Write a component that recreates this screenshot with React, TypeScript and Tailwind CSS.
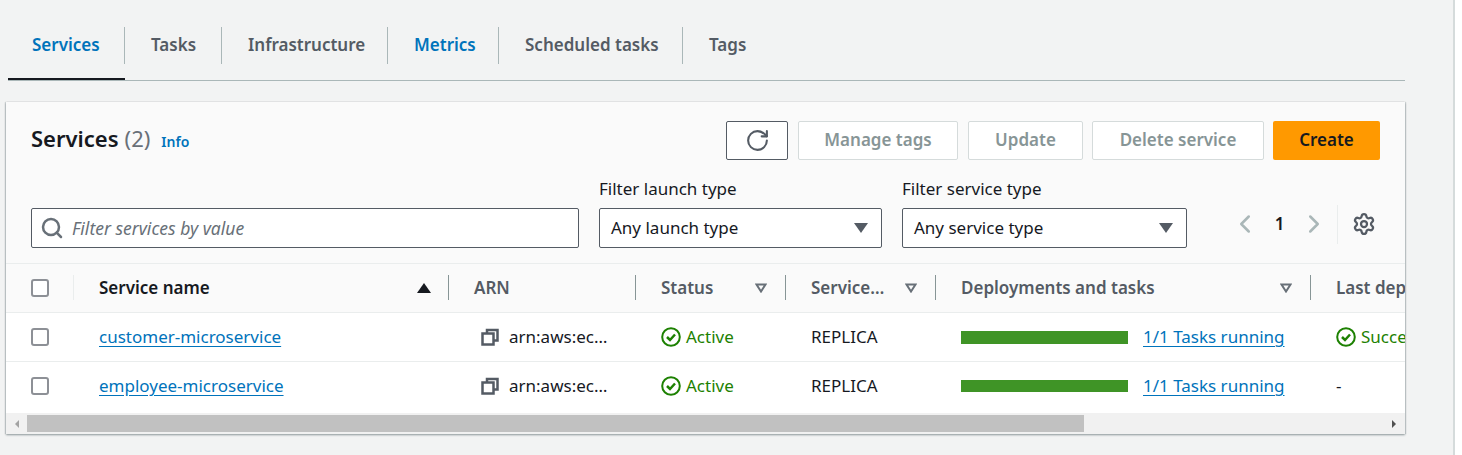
import { ChevronLeft, ChevronRight, RotateCw, Search, Settings } from "lucide-react";

const tabs = [
  { label: "Services", w: "w-[117px]", pad: "pl-[24px]", color: "text-[#0073bb]", active: true },
  { label: "Tasks", w: "w-[97px]", pad: "pl-[26px]", color: "text-[#545b64]" },
  { label: "Infrastructure", w: "w-[166px]", pad: "pl-[26px]", color: "text-[#545b64]" },
  { label: "Metrics", w: "w-[111px]", pad: "pl-[26px]", color: "text-[#0073bb]" },
  { label: "Scheduled tasks", w: "w-[184px]", pad: "pl-[26px]", color: "text-[#545b64]" },
  { label: "Tags", w: "w-[80px]", pad: "pl-[26px]", color: "text-[#545b64]", last: true },
];

function CopyIcon() {
  return (
    <svg width="18" height="18" viewBox="0 0 18 18" fill="none" stroke="#545b64" strokeWidth="2.5" className="shrink-0">
      <path d="M6 5V2h10.500v10.500H13" />
      <rect x="1.500" y="5.500" width="11" height="11" />
    </svg>
  );
}

function CheckIcon() {
  return (
    <svg width="20" height="20" viewBox="0 0 20 20" fill="none" stroke="#1d8102" strokeWidth="2" className="shrink-0">
      <circle cx="10" cy="10" r="8.800" />
      <path d="M6 10l3 3 5-5.500" strokeWidth="2.500" />
    </svg>
  );
}

function FilterCaret() {
  return (
    <svg width="12" height="10" viewBox="0 0 12 10" fill="none" stroke="#687078" strokeWidth="2" className="shrink-0">
      <path d="M1.500 1.500h9L6 8.500z" />
    </svg>
  );
}

function Checkbox() {
  return <div className="w-[18px] h-[18px] rounded-[3px] border-2 border-[#8d9096] bg-white shrink-0" />;
}

function HeadCell({ label, w, filter, dark }: { label: string; w: string; filter?: boolean; dark?: boolean }) {
  return (
    <div className={`${w} h-full flex items-center shrink-0 pl-[25px] pr-[18px] justify-between`}>
      <span className={`font-semibold whitespace-nowrap ${dark ? "text-[#16191f]" : "text-[#545b64]"}`}>{label}</span>
      {filter && <FilterCaret />}
    </div>
  );
}

function Divider() {
  return <div className="w-px h-[25px] bg-[#879596] shrink-0" />;
}

function Row({ name, last }: { name: string; last?: boolean }) {
  return (
    <div className={`flex items-center h-[49px] bg-white ${last ? "pb-[1px]" : "border-b border-[#eaeded]"}`}>
      <div className="w-[68px] pl-[25px] shrink-0">
        <Checkbox />
      </div>
      <div className="w-[400px] pl-[25px] shrink-0">
        <a className="text-[#0073bb] underline underline-offset-[3px]">{name}</a>
      </div>
      <div className="w-[187px] pl-[7px] flex items-center gap-[10px] shrink-0">
        <CopyIcon />
        <span className="text-[#16191f]">arn:aws:ec…</span>
      </div>
      <div className="w-[150px] flex items-center gap-[5px] shrink-0">
        <CheckIcon />
        <span className="text-[#1d8102]">Active</span>
      </div>
      <div className="w-[150px] text-[#16191f] shrink-0">REPLICA</div>
      <div className="w-[375px] flex items-center shrink-0">
        <div className={`w-[167px] bg-[#3f9426] ${last ? "h-[12px]" : "h-[13px]"}`} />
        <a className="ml-[15px] text-[#0073bb] underline underline-offset-[3px]">1/1 Tasks running</a>
      </div>
      {last ? (
        <span className="text-[#16191f]">-</span>
      ) : (
        <div className="flex items-center gap-[5px]">
          <CheckIcon />
          <span className="text-[#1d8102] whitespace-nowrap">Success</span>
        </div>
      )}
    </div>
  );
}

export default function App() {
  return (
    <div className="h-[455px] w-full flex overflow-hidden bg-[#f2f3f3] text-[17px] font-['Noto_Sans',sans-serif] text-[#16191f]">
      <div className="w-[1405px] shrink-0 pl-[6px] pt-[27px]">
        {/* tabs */}
        <div className="ml-[2px] h-[54px] flex border-b border-[#aab7b8]">
          {tabs.map((t) => (
            <div key={t.label} className={`${t.w} relative h-[53px] pb-[17px] shrink-0 flex items-center`}>
              <div className={`w-full h-[37px] flex items-center ${t.pad} ${t.last ? "" : "border-r border-[#aab7b8]"}`}>
                <span className={`font-semibold ${t.color}`}>{t.label}</span>
              </div>
              {t.active && <div className="absolute left-0 right-0 bottom-0 h-[2px] bg-[#16191f]" />}
            </div>
          ))}
        </div>

        {/* services panel */}
        <div className="mt-[21px] h-[332px] bg-[#fafafa] shadow-[0_1px_2px_rgba(0,28,36,0.4),-1px_0_1px_rgba(0,28,36,0.12),1px_0_1px_rgba(0,28,36,0.12)] overflow-hidden">
          <div className="h-[162px] border-b border-[#eaeded] pl-[25px] pr-[25px] pt-[19px]">
            <div className="flex justify-between h-[40px]">
              <div className="flex items-baseline pt-[2px]">
                <span className="text-[22px] font-semibold leading-[30px]">Services</span>
                <span className="ml-[6px] text-[22px] text-[#687078] leading-[30px]">(2)</span>
                <a className="ml-[11px] text-[14px] font-semibold text-[#0073bb]">Info</a>
              </div>
              <div className="flex gap-[9px] font-semibold">
                <button className="w-[62px] h-[39px] rounded-[2px] border border-[#545b64] bg-white flex items-center justify-center mr-[1px]">
                  <RotateCw size={25} color="#545b64" strokeWidth={2} />
                </button>
                <button className="w-[160px] h-[39px] pb-[2px] rounded-[2px] border border-[#d5dbdb] bg-white text-[#879596] mr-[1px]">Manage tags</button>
                <button className="w-[115px] h-[39px] pb-[2px] rounded-[2px] border border-[#d5dbdb] bg-white text-[#879596]">Update</button>
                <button className="w-[172px] h-[39px] pb-[2px] rounded-[2px] border border-[#d5dbdb] bg-white text-[#879596]">Delete service</button>
                <button className="w-[107px] h-[39px] pb-[2px] rounded-[2px] bg-[#ff9900] text-[#16191f]">Create</button>
              </div>
            </div>

            <div className="flex items-end mt-[17px]">
              <div className="w-[548px] h-[40px] rounded-[2px] border border-[#545b64] bg-white flex items-center pl-[8px] gap-[8px] shrink-0">
                <Search size={24} color="#687078" strokeWidth={2.5} />
                <span className="italic text-[17.500px] text-[#687078]">Filter services by value</span>
              </div>
              <div className="ml-[20px] w-[283px] shrink-0">
                <div className="h-[22px] leading-[22px] mb-[8px]">Filter launch type</div>
                <div className="h-[40px] rounded-[2px] border border-[#545b64] bg-white flex items-center justify-between pl-[11px] pr-[13px]">
                  <span>Any launch type</span>
                  <div className="w-0 h-0 border-x-[7px] border-x-transparent border-t-[10px] border-t-[#545b64]" />
                </div>
              </div>
              <div className="ml-[20px] w-[285px] shrink-0">
                <div className="h-[22px] leading-[22px] mb-[8px]">Filter service type</div>
                <div className="h-[40px] rounded-[2px] border border-[#545b64] bg-white flex items-center justify-between pl-[11px] pr-[13px]">
                  <span>Any service type</span>
                  <div className="w-0 h-0 border-x-[7px] border-x-transparent border-t-[10px] border-t-[#545b64]" />
                </div>
              </div>
              <div className="ml-[43px] mb-[4px] h-[40px] flex items-center">
                <ChevronLeft size={30} color="#aab7b8" strokeWidth={2} />
                <span className="w-[39px] text-center font-semibold">1</span>
                <ChevronRight size={30} color="#aab7b8" strokeWidth={2} />
                <div className="ml-[8px] w-px h-[39px] bg-[#eaeded]" />
                <Settings size={24} color="#545b64" strokeWidth={2.25} className="ml-[14px]" />
              </div>
            </div>
          </div>

          {/* table */}
          <div className="overflow-hidden">
            <div className="flex items-center h-[49px] pb-[1px] border-b border-[#eaeded] w-[1500px]">
              <div className="w-[68px] h-full flex items-center pl-[25px] shrink-0 justify-between">
                <Checkbox />
                <div className="w-px h-[25px] bg-[#eaeded]" />
              </div>
              <div className="w-[374px] pl-[25px] pr-[17px] h-full flex items-center justify-between shrink-0">
                <span className="font-semibold text-[#16191f]">Service name</span>
                <div className="w-0 h-0 border-x-[7px] border-x-transparent border-b-[10px] border-b-[#16191f]" />
              </div>
              <Divider />
              <HeadCell label="ARN" w="w-[186px]" />
              <Divider />
              <HeadCell label="Status" w="w-[149px]" filter />
              <Divider />
              <HeadCell label="Service…" w="w-[149px]" filter />
              <Divider />
              <HeadCell label="Deployments and tasks" w="w-[374px]" filter />
              <Divider />
              <HeadCell label="Last deployment" w="w-[200px]" />
            </div>
            <div className="w-[1500px] bg-white pb-[2px]">
              <Row name="customer-microservice" />
              <Row name="employee-microservice" last />
            </div>
          </div>

          {/* horizontal scrollbar */}
          <div className="h-[21px] bg-[#f1f1f1] flex items-start">
            <div className="w-[21px] h-[21px] flex items-center justify-center shrink-0">
              <div className="w-0 h-0 border-y-[4px] border-y-transparent border-r-[4px] border-r-[#a3a3a3]" />
            </div>
            <div className="w-[1057px] h-[17px] mt-[2px] bg-[#c1c1c1] shrink-0" />
            <div className="flex-1 h-[21px] flex items-center justify-end pr-[9px]">
              <div className="w-0 h-0 border-y-[4px] border-y-transparent border-l-[4px] border-l-[#505050]" />
            </div>
          </div>
        </div>
      </div>
      <div className="flex-1" />
      <div className="w-[9px] bg-white border-l-2 border-[#d5dbdb] shrink-0" />
    </div>
  );
}
